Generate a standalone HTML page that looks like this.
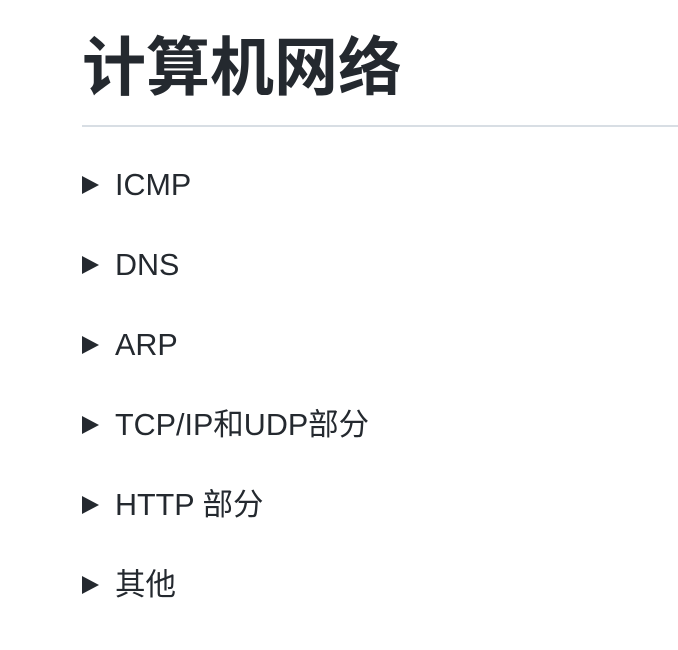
<!DOCTYPE html>
<html><head><meta charset="utf-8"><style>
html,body{margin:0;padding:0;background:#fff;width:678px;height:650px;overflow:hidden}
body{font-family:"Liberation Sans","Noto Sans CJK SC",sans-serif;color:#24292f}
h1{position:absolute;left:82px;top:23px;margin:0;font-size:64px;line-height:90px;font-weight:bold;font-family:"Liberation Sans","Noto Sans CJK SC",sans-serif;letter-spacing:0}
.hr{position:absolute;left:82px;top:125px;width:596px;height:2px;background:#d8dee4}
.item{position:absolute;left:82px;height:40px;line-height:40px;font-size:30.5px;white-space:nowrap}
.tri{display:inline-block;width:0;height:0;border-left:17px solid #24292f;border-top:9.5px solid transparent;border-bottom:9.5px solid transparent;vertical-align:middle;margin-right:16px;position:relative;top:-2px}
</style></head><body>
<h1>计算机网络</h1>
<div class="hr"></div>
<div class="item" style="top:165px"><span class="tri"></span>ICMP</div>
<div class="item" style="top:245px"><span class="tri"></span>DNS</div>
<div class="item" style="top:325px"><span class="tri"></span>ARP</div>
<div class="item" style="top:405px"><span class="tri"></span>TCP/IP和UDP部分</div>
<div class="item" style="top:485px"><span class="tri"></span>HTTP 部分</div>
<div class="item" style="top:565px"><span class="tri"></span>其他</div>
</body></html>
